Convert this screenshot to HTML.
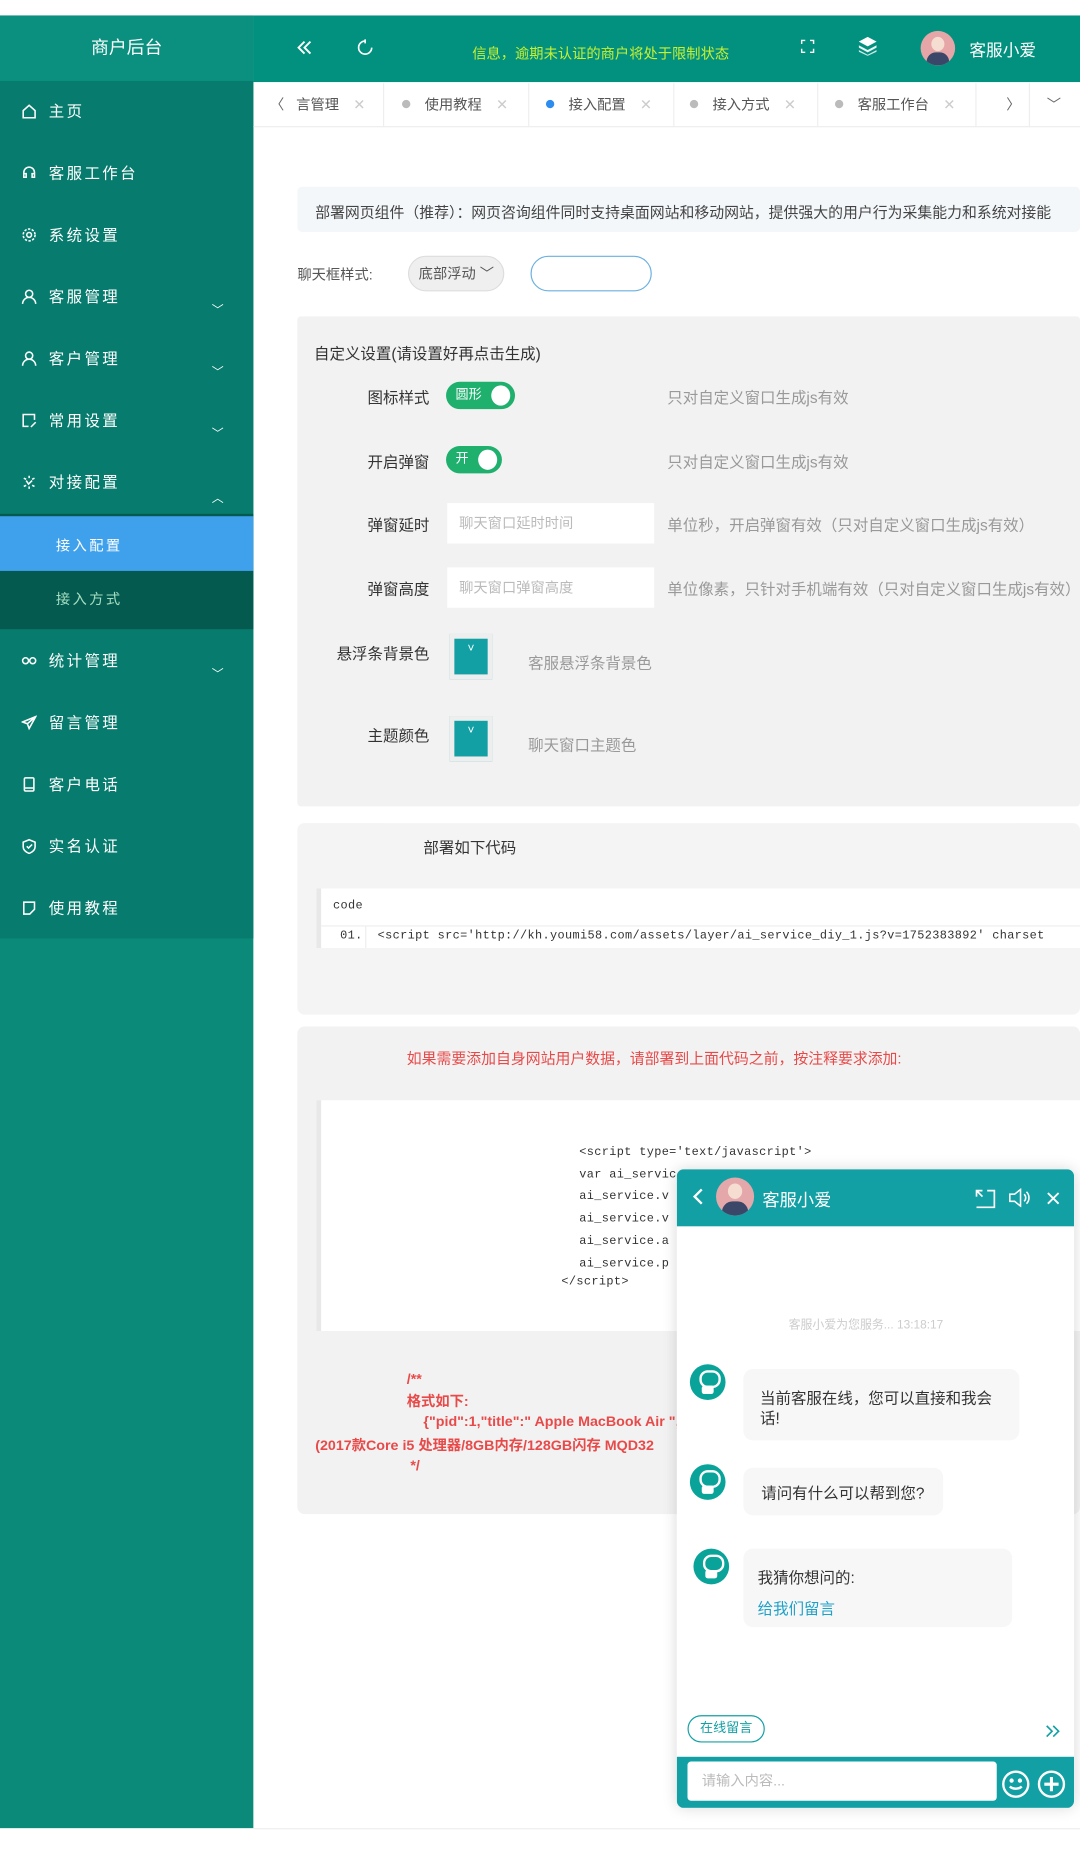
<!DOCTYPE html>
<html><head><meta charset="utf-8">
<style>
*{margin:0;padding:0;box-sizing:border-box}
html,body{width:1080px;height:1865px;overflow:hidden;background:#fff}
#w{position:absolute;left:0;top:0;width:908px;height:1568px;transform:scale(1.18943);transform-origin:0 0;font-family:"Liberation Sans","Noto Sans CJK SC",sans-serif;color:#333;font-size:13px}
.a{position:absolute}
.side{left:0;top:13px;width:213px;height:1524px;background:#0b8a7a}
.menu{left:0;top:68px;width:213px;height:721px;background:#077c6e}
.logo{left:0;top:13px;width:213px;height:55px;background:#0b9080;color:#fff;font-size:15px;text-align:center;line-height:55px}
.hd{left:213px;top:13px;width:695px;height:56px;background:#03917f}
.mi{left:18px;color:#fff;font-size:13px;letter-spacing:2px}
.mi svg{width:13px;height:13px;margin-right:10px;vertical-align:-2px;fill:none;stroke:#fff;stroke-width:1.3}
.car{left:178px;color:#fff;font-size:10px}
.tab{top:70px;height:37px;line-height:37px;color:#555;font-size:12px}
.dot{display:inline-block;width:7px;height:7px;border-radius:50%;background:#bbb;margin-right:12px;vertical-align:1px}
.x{color:#ccc;margin-left:12px}
.lbl{color:#333;font-size:13px;text-align:right;width:110px}
.hint{color:#999;font-size:13px}
.inp{background:#fff;width:174px;height:34px;color:#bbb;font-size:12px;line-height:34px;padding-left:10px}
.sw{background:#1fb06e;border-radius:12px;height:23px;color:#fff;font-size:11px;line-height:23px;padding-left:8px}
.sw b{position:absolute;right:4px;top:3px;width:16px;height:17px;border-radius:50%;background:#fff}
.cp{width:36px;height:38px;background:#12a0a4;border:4px solid #eee;color:#fff;font-size:10px;text-align:center;line-height:18px}
.mono{font-family:"Liberation Mono",monospace;font-size:10px;color:#333;letter-spacing:.3px}
.red{color:#e84a4a}
.bot{width:30px;height:30px;border-radius:50%;background:#0aa39a}
.bot:before{content:"";position:absolute;left:8px;top:5px;width:14px;height:11px;border:2px solid #fff;border-radius:7px}
.bot:after{content:"";position:absolute;left:10px;top:18px;width:10px;height:7px;background:#fff;border-radius:2px}
.bub{background:#f7f7f7;border-radius:8px;color:#333;font-size:13px}
</style></head><body><div id="w">
<div class="a side"></div>
<div class="a menu"></div>
<div class="a logo">商户后台</div>
<div class="a hd"></div>
<svg class="a" style="left:249px;top:33px" width="14" height="14" viewBox="0 0 14 14" fill="none" stroke="#fff" stroke-width="1.6"><path d="M7 2L2 7l5 5M12 2L7 7l5 5"/></svg>
<svg class="a" style="left:300px;top:33px" width="14" height="14" viewBox="0 0 14 14" fill="none" stroke="#fff" stroke-width="1.4"><path d="M7 1.5A5.5 5.5 0 1 0 12.5 7"/><path d="M7 0v3.5"/></svg>
<div class="a" style="left:397px;top:36px;color:#c6f031;font-size:12px">信息，逾期未认证的商户将处于限制状态</div>
<svg class="a" style="left:673px;top:33px" width="12" height="12" viewBox="0 0 12 12" fill="none" stroke="#fff" stroke-width="1.2"><path d="M1 4V1h3M8 1h3v3M11 8v3H8M4 11H1V8"/></svg>
<svg class="a" style="left:722px;top:31px" width="15" height="16" viewBox="0 0 15 16" fill="#fff"><path d="M7.5 0L15 4 7.5 8 0 4z"/><path d="M0 7l7.5 4L15 7v2l-7.5 4L0 9z" opacity=".9"/><path d="M0 11l7.5 4 7.5-4v1.5L7.5 16 0 12.5z" opacity=".8"/></svg>
<div class="a" style="left:774px;top:26px;width:29px;height:29px;border-radius:50%;background:#e6a6a8;overflow:hidden"><div class="a" style="left:9px;top:5px;width:11px;height:12px;border-radius:50%;background:#f5ddd2"></div><div class="a" style="left:5px;top:18px;width:19px;height:11px;border-radius:8px 8px 0 0;background:#3b4768"></div></div>
<div class="a" style="left:815px;top:32px;color:#fff;font-size:14px">客服小爱</div>

<div class="a mi" style="top:83px"><svg viewBox="0 0 13 13"><path d="M1.5 6L6.5 1.5 11.5 6V12H1.5z"/></svg>主页</div>
<div class="a mi" style="top:135px"><svg viewBox="0 0 13 13"><path d="M2 8V6a4.5 4.5 0 0 1 9 0v2M2 7h2v3H2zM9 7h2v3H9z"/></svg>客服工作台</div>
<div class="a mi" style="top:187px"><svg viewBox="0 0 13 13"><circle cx="6.5" cy="6.5" r="2"/><circle cx="6.5" cy="6.5" r="5" stroke-dasharray="2 1.2"/></svg>系统设置</div>
<div class="a mi" style="top:239px"><svg viewBox="0 0 13 13"><circle cx="6.5" cy="4" r="3"/><path d="M1 12.5a5.5 5.5 0 0 1 11 0"/></svg>客服管理</div>
<div class="a car" style="top:252px">﹀</div>
<div class="a mi" style="top:291px"><svg viewBox="0 0 13 13"><circle cx="6.5" cy="4" r="3"/><path d="M1 12.5a5.5 5.5 0 0 1 11 0"/></svg>客户管理</div>
<div class="a car" style="top:304px">﹀</div>
<div class="a mi" style="top:343px"><svg viewBox="0 0 13 13"><path d="M11 6V1.5H1.5v10H6"/><path d="M8 12l4-4"/></svg>常用设置</div>
<div class="a car" style="top:356px">﹀</div>
<div class="a mi" style="top:395px"><svg viewBox="0 0 13 13"><path d="M2 3l2 1M6.5 1v2M11 3l-2 1M2 10l2-1M11 10l-2-1M6.5 12v-2M4 5l2 3 3-3"/></svg>对接配置</div>
<div class="a car" style="top:410px">︿</div>
<div class="a" style="left:0;top:432px;width:213px;height:97px;background:#055a50"></div>
<div class="a" style="left:0;top:434px;width:213px;height:46px;background:#3fa0ec"></div>
<div class="a" style="left:47px;top:450px;color:#fff;font-size:12px;letter-spacing:2px">接入配置</div>
<div class="a" style="left:47px;top:495px;color:#cfd;font-size:12px;letter-spacing:2px;opacity:.8">接入方式</div>
<div class="a mi" style="top:545px"><svg viewBox="0 0 13 13"><circle cx="3.5" cy="6.5" r="2.5"/><circle cx="9.5" cy="6.5" r="2.5"/></svg>统计管理</div>
<div class="a car" style="top:558px">﹀</div>
<div class="a mi" style="top:597px"><svg viewBox="0 0 13 13"><path d="M12 1.5L1 6l4 1.5 1.5 4z M5 7.5L12 1.5"/></svg>留言管理</div>
<div class="a mi" style="top:649px"><svg viewBox="0 0 13 13"><rect x="2.5" y="1" width="8" height="11" rx="1"/><path d="M2.5 9.5h8"/></svg>客户电话</div>
<div class="a mi" style="top:701px"><svg viewBox="0 0 13 13"><path d="M6.5 1L11.5 3v4c0 3-2.5 4.5-5 5.5C4 11.5 1.5 10 1.5 7V3z"/><path d="M4.5 6.5l1.5 1.5 3-3"/></svg>实名认证</div>
<div class="a mi" style="top:753px"><svg viewBox="0 0 13 13"><path d="M2 1.5h9v6l-4 4H2z"/></svg>使用教程</div>

<!-- tabs -->
<div class="a" style="left:213px;top:69px;width:695px;height:38px;border-bottom:1px solid #eee"></div>
<div class="a tab" style="left:227px;color:#666">〈</div>
<div class="a tab" style="left:249px">言管理<span class="x">✕</span></div>
<div class="a" style="left:322px;top:70px;width:1px;height:37px;background:#eee"></div>
<div class="a tab" style="left:338px"><span class="dot"></span>使用教程<span class="x">✕</span></div>
<div class="a" style="left:444px;top:70px;width:1px;height:37px;background:#eee"></div>
<div class="a tab" style="left:459px"><span class="dot" style="background:#2d8cf0"></span>接入配置<span class="x">✕</span></div>
<div class="a" style="left:566px;top:70px;width:1px;height:37px;background:#eee"></div>
<div class="a tab" style="left:580px"><span class="dot"></span>接入方式<span class="x">✕</span></div>
<div class="a" style="left:687px;top:70px;width:1px;height:37px;background:#eee"></div>
<div class="a tab" style="left:702px"><span class="dot"></span>客服工作台<span class="x">✕</span></div>
<div class="a" style="left:820px;top:70px;width:1px;height:37px;background:#eee"></div>
<div class="a tab" style="left:846px;color:#666">〉</div>
<div class="a" style="left:865px;top:70px;width:1px;height:37px;background:#eee"></div>
<div class="a tab" style="left:880px;color:#666">﹀</div>

<div class="a" style="left:250px;top:157px;width:658px;height:38px;background:#f3f7fa;border-radius:4px"></div>
<div class="a" style="left:265px;top:168px;font-size:12.5px;color:#444;white-space:nowrap">部署网页组件（推荐）：网页咨询组件同时支持桌面网站和移动网站，提供强大的用户行为采集能力和系统对接能</div>
<div class="a" style="left:250px;top:222px;color:#555;font-size:12px">聊天框样式:</div>
<div class="a" style="left:343px;top:215px;width:81px;height:30px;border-radius:15px;background:#efefef;border:1px solid #ddd;color:#555;font-size:12px;line-height:28px;padding-left:8px">底部浮动 ﹀</div>
<div class="a" style="left:446px;top:215px;width:102px;height:30px;border-radius:15px;border:1.5px solid #6ab0e0"></div>

<div class="a" style="left:250px;top:266px;width:658px;height:412px;background:#f2f2f2;border-radius:3px"></div>
<div class="a" style="left:264px;top:287px;font-size:13px">自定义设置(请设置好再点击生成)</div>
<div class="a lbl" style="left:251px;top:324px">图标样式</div>
<div class="a sw" style="left:375px;top:321px;width:58px">圆形<b></b></div>
<div class="a hint" style="left:561px;top:324px">只对自定义窗口生成js有效</div>
<div class="a lbl" style="left:251px;top:378px">开启弹窗</div>
<div class="a sw" style="left:375px;top:375px;width:47px">开<b></b></div>
<div class="a hint" style="left:561px;top:378px">只对自定义窗口生成js有效</div>
<div class="a lbl" style="left:251px;top:431px">弹窗延时</div>
<div class="a inp" style="left:376px;top:423px">聊天窗口延时时间</div>
<div class="a hint" style="left:561px;top:431px">单位秒，开启弹窗有效（只对自定义窗口生成js有效）</div>
<div class="a lbl" style="left:251px;top:485px">弹窗高度</div>
<div class="a inp" style="left:376px;top:477px">聊天窗口弹窗高度</div>
<div class="a hint" style="left:561px;top:485px">单位像素，只针对手机端有效（只对自定义窗口生成js有效）</div>
<div class="a lbl" style="left:251px;top:539px">悬浮条背景色</div>
<div class="a cp" style="left:378px;top:533px">˅</div>
<div class="a hint" style="left:444px;top:547px">客服悬浮条背景色</div>
<div class="a lbl" style="left:251px;top:608px">主题颜色</div>
<div class="a cp" style="left:378px;top:602px">˅</div>
<div class="a hint" style="left:444px;top:616px">聊天窗口主题色</div>

<div class="a" style="left:250px;top:692px;width:658px;height:161px;background:#f4f4f4;border-radius:6px"></div>
<div class="a" style="left:356px;top:702px;font-size:13px">部署如下代码</div>
<div class="a" style="left:266px;top:747px;width:642px;height:50px;background:#fff;border-left:4px solid #e8e8e8"></div>
<div class="a" style="left:270px;top:778px;width:638px;height:1px;background:#eee"></div>
<div class="a" style="left:307px;top:779px;width:1px;height:18px;background:#eee"></div>
<div class="a mono" style="left:280px;top:757px">code</div>
<div class="a mono" style="left:286px;top:782px;white-space:nowrap">01.&nbsp; &lt;script src='http://kh.youmi58.com/assets/layer/ai_service_diy_1.js?v=1752383892' charset</div>

<div class="a" style="left:250px;top:863px;width:658px;height:410px;background:#f2f2f2;border-radius:6px"></div>
<div class="a red" style="left:342px;top:879px;font-size:12.5px">如果需要添加自身网站用户数据，请部署到上面代码之前，按注释要求添加:</div>
<div class="a" style="left:266px;top:925px;width:642px;height:194px;background:#fff;border-left:4px solid #e8e8e8"></div>
<div class="a mono" style="left:487px;top:961px;line-height:18.7px;white-space:pre">&lt;script type='text/javascript'&gt;
var ai_servic
ai_service.v
ai_service.v
ai_service.a
ai_service.p</div>
<div class="a mono" style="left:472px;top:1073px">&lt;/script&gt;</div>
<div class="a red" style="left:342px;top:1150px;font-size:12px;font-weight:bold;line-height:19px">/**<br>格式如下:</div>
<div class="a red" style="left:356px;top:1188px;font-size:12px;font-weight:bold;white-space:nowrap">{"pid":1,"title":" Apple MacBook Air ","i</div>
<div class="a red" style="left:265px;top:1206px;font-size:12px;font-weight:bold;white-space:nowrap">(2017款Core i5 处理器/8GB内存/128GB闪存 MQD32</div>
<div class="a red" style="left:345px;top:1225px;font-size:12px;font-weight:bold">*/</div>

<!-- chat widget -->
<div class="a" style="left:569px;top:983px;width:334px;height:537px;background:#fff;border-radius:6px;box-shadow:0 0 12px rgba(0,0,0,.15);overflow:hidden">
<div class="a" style="left:0;top:0;width:334px;height:48px;background:#13a0a4"></div>
<svg class="a" style="left:13px;top:16px" width="10" height="14" viewBox="0 0 10 14" fill="none" stroke="#fff" stroke-width="2"><path d="M8 1L2 7l6 6"/></svg>
<div class="a" style="left:33px;top:7px;width:32px;height:32px;border-radius:50%;background:#e4a8ab;overflow:hidden"><div class="a" style="left:10px;top:5px;width:12px;height:13px;border-radius:50%;background:#f5ddd2"></div><div class="a" style="left:5px;top:20px;width:22px;height:12px;border-radius:9px 9px 0 0;background:#3b4768"></div></div>
<div class="a" style="left:72px;top:15px;color:#fff;font-size:14.5px">客服小爱</div>
<svg class="a" style="left:251px;top:17px" width="17" height="16" viewBox="0 0 17 16" fill="none" stroke="#fff" stroke-width="1.4"><path d="M1 6V1h5M1 1l5 5M16 9v6H1M16 9V1h-6"/></svg>
<svg class="a" style="left:279px;top:16px" width="18" height="16" viewBox="0 0 18 16" fill="none" stroke="#fff" stroke-width="1.3"><path d="M1 5h4l5-4v14l-5-4H1z"/><path d="M13 5a4 4 0 0 1 0 6M15 3a7 7 0 0 1 0 10"/></svg>
<svg class="a" style="left:311px;top:19px" width="11" height="11" viewBox="0 0 11 11" fill="none" stroke="#fff" stroke-width="1.6"><path d="M1 1l9 9M10 1l-9 9"/></svg>
<div class="a" style="left:94px;top:122px;color:#ccc;font-size:10px">客服小爱为您服务... 13:18:17</div>
<div class="a bot" style="left:11px;top:164px"></div>
<div class="a bub" style="left:56px;top:168px;width:232px;height:60px;padding:16px 14px;line-height:17px">当前客服在线，您可以直接和我会话!</div>
<div class="a bot" style="left:11px;top:248px"></div>
<div class="a bub" style="left:56px;top:251px;width:168px;height:40px;padding:11px 15px">请问有什么可以帮到您?</div>
<div class="a bot" style="left:14px;top:319px"></div>
<div class="a bub" style="left:56px;top:319px;width:226px;height:66px;padding:12px 12px;line-height:26px">我猜你想问的:<br><span style="color:#20a2c8">给我们留言</span></div>
<div class="a" style="left:9px;top:459px;width:65px;height:23px;border:1.5px solid #13a0a4;border-radius:12px;color:#13a0a4;font-size:11px;text-align:center;line-height:20px">在线留言</div>
<svg class="a" style="left:310px;top:467px" width="13" height="11" viewBox="0 0 13 11" fill="none" stroke="#13a0a4" stroke-width="1.4"><path d="M1 1l4.5 4.5L1 10M6.5 1l4.5 4.5L6.5 10"/></svg>
<div class="a" style="left:0;top:494px;width:334px;height:43px;background:#13a0a4"></div>
<div class="a" style="left:9px;top:498px;width:260px;height:33px;background:#fff;border-radius:3px;color:#bbb;font-size:12px;line-height:33px;padding-left:12px">请输入内容...</div>
<svg class="a" style="left:273px;top:505px" width="24" height="24" viewBox="0 0 24 24" fill="none" stroke="#fff" stroke-width="2"><circle cx="12" cy="12" r="10.5"/><path d="M7 14a6 4 0 0 0 10 0"/><circle cx="8.5" cy="9" r=".8" fill="#fff"/><circle cx="15.5" cy="9" r=".8" fill="#fff"/></svg>
<svg class="a" style="left:303px;top:505px" width="24" height="24" viewBox="0 0 24 24" fill="none" stroke="#fff" stroke-width="2"><circle cx="12" cy="12" r="10.5"/><path d="M12 6v12M6 12h12" stroke-width="2.6"/></svg>
</div>
<div class="a" style="left:213px;top:1537px;width:695px;height:1px;background:#eee"></div>
</div></body></html>
